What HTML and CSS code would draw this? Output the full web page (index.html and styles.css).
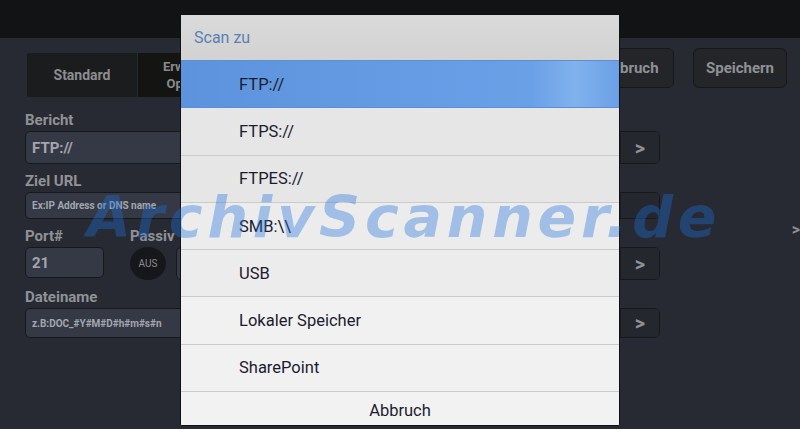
FILE: index.html
```html
<!DOCTYPE html>
<html lang="de">
<head>
  <meta charset="UTF-8">
  <meta name="viewport" content="width=device-width, initial-scale=1.0">
  <title>Scan zu</title>
  <link rel="stylesheet" href="styles.css">
</head>
<body>
  <div class="screen">
    <div class="topbar"></div>
    <div class="main">
      <div class="toolbar">
        <div class="tabs">
          <div class="tab active">Standard</div>
          <div class="tab">Erweiterte<br>Optionen</div>
        </div>
        <div class="actions">
          <button class="btn">Abbruch</button>
          <button class="btn">Speichern</button>
        </div>
      </div>

      <div class="form">
        <div class="label">Bericht</div>
        <div class="field">
          <div class="value big">FTP://</div>
          <div class="chev">&gt;</div>
        </div>

        <div class="label">Ziel URL</div>
        <div class="field thin">
          <div class="value small">Ex:IP Address or DNS name</div>
          <div class="chev"></div>
        </div>

        <div class="row">
          <div class="col port">
            <div class="label">Port#</div>
            <div class="field short">
              <div class="value big">21</div>
            </div>
          </div>
          <div class="col grow">
            <div class="label">Passiv</div>
            <div class="toggle-row">
              <div class="toggle">AUS</div>
              <div class="field format">
                <div class="value big right">PDF</div>
                <div class="chev">&gt;</div>
              </div>
            </div>
          </div>
        </div>

        <div class="label">Dateiname</div>
        <div class="field thin name">
          <div class="value small">z.B:DOC_#Y#M#D#h#m#s#n</div>
          <div class="chev">&gt;</div>
        </div>
      </div>
      <div class="edge">&gt;</div>
    </div>
  </div>

  <div class="dialog">
    <div class="dialog-title">Scan zu</div>
    <ul class="options">
      <li class="selected">FTP://</li>
      <li>FTPS://</li>
      <li>FTPES://</li>
      <li>SMB:\\</li>
      <li>USB</li>
      <li>Lokaler Speicher</li>
      <li>SharePoint</li>
    </ul>
    <div class="cancel">Abbruch</div>
  </div>

  <div class="watermark">ArchivScanner.de</div>
</body>
</html>
```

FILE: styles.css
```css
/* whole screen, photographed tablet */
body {
  margin: 0;
  width: 800px;
  height: 429px;
  overflow: hidden;
  background: #131416;
  font-family: Roboto, "Liberation Sans", sans-serif;
  position: relative;
}
.screen {
  display: flex;
  flex-direction: column;
  height: 429px;
}
.topbar {
  height: 38px;
  background: #121315;
}
.main {
  flex: 1;
  background: #272a32;
  padding: 10px 13px 0 25px;
  position: relative;
}

/* tabs and buttons */
.toolbar {
  display: flex;
  justify-content: space-between;
  align-items: flex-start;
}
.tabs {
  display: flex;
  margin-top: 5px;
  margin-left: 2px;
}
.tab {
  width: 110px;
  height: 44px;
  display: flex;
  align-items: center;
  justify-content: center;
  text-align: center;
  background: #141512;
  color: #8a8b88;
  font-size: 13px;
  font-weight: bold;
  line-height: 17px;
  margin-right: 1px;
}
.tab.active {
  background: #1b1c1e;
  color: #8c8d90;
  font-size: 14px;
}
.actions {
  display: flex;
  gap: 19px;
}
.btn {
  height: 40px;
  padding: 0 12px;
  min-width: 88px;
  background: #232529;
  border: 1.5px solid #17181a;
  border-radius: 6px;
  color: #8f9195;
  font-family: Roboto, "Liberation Sans", sans-serif;
  font-size: 15px;
  font-weight: bold;
}

/* form */
.form {
  width: 635px;
  margin-top: 13px;
}
.label {
  color: #909297;
  font-size: 15px;
  font-weight: bold;
  height: 20px;
  line-height: 20px;
  margin-bottom: 1px;
}
.field {
  display: flex;
  height: 33px;
  border: 1.5px solid #17181a;
  border-radius: 5px;
  background: #353945;
  margin-bottom: 7px;
  overflow: hidden;
  box-sizing: border-box;
}
.field.thin {
  height: 27px;
}
.field.thin.name {
  height: 30px;
}
.value {
  flex: 1;
  display: flex;
  align-items: center;
  padding-left: 6px;
  color: #a3a6ae;
  font-weight: bold;
}
.value.big {
  font-size: 15px;
}
.value.small {
  font-size: 10px;
  color: #a3a6ae;
}
.value.right {
  justify-content: flex-end;
  padding-right: 4px;
}
.chev {
  width: 38px;
  display: flex;
  align-items: center;
  justify-content: center;
  background: #24272d;
  border-left: 1px solid #1c1d20;
  color: #8f9197;
  font-size: 20px;
  font-weight: bold;
}
.row {
  display: flex;
  gap: 26px;
}
.col.port {
  width: 79px;
}
.col.grow {
  flex: 1;
}
.field.short {
  height: 31px;
}
.toggle-row {
  display: flex;
  align-items: flex-start;
  gap: 10px;
}
.toggle {
  width: 36px;
  height: 33px;
  border-radius: 50%;
  background: #16171a;
  color: #8a8b90;
  font-size: 10px;
  display: flex;
  align-items: center;
  justify-content: center;
}
.field.format {
  flex: 1;
}
.edge {
  position: absolute;
  right: 0;
  top: 182px;
  color: #8f9197;
  font-size: 16px;
  font-weight: bold;
}

/* modal list */
.dialog {
  position: absolute;
  left: 180px;
  top: 14px;
  width: 440px;
  height: 412px;
  background: #ececec;
  border: 1px solid #101113;
  border-radius: 2px;
  box-sizing: border-box;
  overflow: hidden;
}
.dialog-title {
  height: 46px;
  line-height: 46px;
  padding-left: 13px;
  background: linear-gradient(#dadada, #d2d2d2);
  border-bottom: 1px solid #5f8fcc;
  color: #5a80b4;
  font-size: 16px;
  box-sizing: border-box;
}
.options {
  list-style: none;
  margin: 0;
  padding: 0;
}
.options li {
  height: 47.3px;
  display: flex;
  align-items: center;
  padding-left: 58px;
  border-bottom: 1px solid #cbcbcb;
  box-sizing: border-box;
  color: #1c1b30;
  font-size: 16.5px;
  background: #e6e6e6;
}
.options li:nth-child(n+4) {
  background: #ececec;
}
.options li:nth-child(n+6) {
  background: #f1f1f1;
}
.options li.selected {
  background: linear-gradient(90deg, #5c93dc, #6aa0e6 80%, #80b2ee 90%, #6aa0e6);
  border-bottom: 1px solid #5a8ed6;
}
.cancel {
  text-align: center;
  color: #1c1b30;
  font-size: 16.5px;
  padding-top: 9px;
  background: #f2f2f2;
  height: 40px;
}

/* watermark over everything */
.watermark {
  position: absolute;
  left: 87px;
  top: 184px;
  font-family: "DejaVu Sans", sans-serif;
  font-weight: bold;
  font-style: italic;
  font-size: 57px;
  letter-spacing: 4.8px;
  color: rgba(30, 110, 220, 0.37);
  white-space: nowrap;
}
```
